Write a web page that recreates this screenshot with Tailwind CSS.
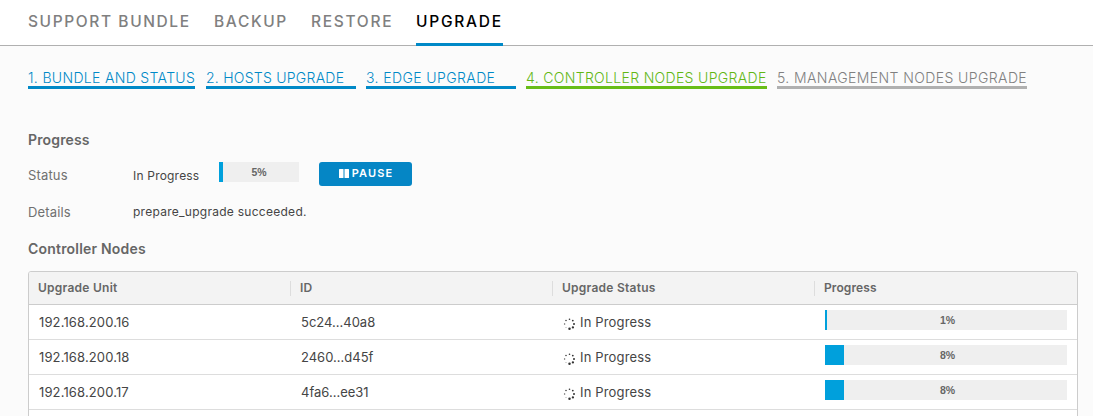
<!DOCTYPE html>
<html lang="en">
<head>
<meta charset="utf-8">
<title>Upgrade</title>
<script src="https://cdn.jsdelivr.net/npm/@tailwindcss/browser@4"></script>
</head>
<body class="h-[416px] overflow-hidden bg-[#fbfbfb] font-['Inter',sans-serif] text-[13px] text-[#454545]">
<svg class="hidden"><symbol id="spin" viewBox="0 0 12 12"><g fill="#333"><circle cx="6.5" cy="1.2" r=".8"/><circle cx="9.8" cy="2.6" r=".9"/><circle cx="11" cy="6" r="1"/><circle cx="9.9" cy="9.4" r="1.15"/><circle cx="6.5" cy="10.7" r="1.25"/><circle cx="3" cy="9.4" r=".5" opacity=".5"/><circle cx="1.6" cy="6" r=".7" opacity=".8"/><circle cx="3" cy="2.6" r=".75"/></g></symbol></svg>
<nav class="flex h-[46px] border-b border-[#b0b0b0] bg-white pl-7 text-[15.5px] leading-[44px] font-medium text-[#808080] whitespace-nowrap">
  <a class="w-[186px] tracking-[1.6px]">SUPPORT BUNDLE</a>
  <a class="w-[97px] tracking-[1.65px]">BACKUP</a>
  <a class="w-[105px] tracking-[1.7px]">RESTORE</a>
  <a class="h-[46px] w-[87px] border-b-3 border-[#0089c7] tracking-[1.75px] text-black">UPGRADE</a>
</nav>
<main class="px-7 pt-[21px]">
  <ol class="flex h-[22px] text-[14px] leading-[22px] font-light whitespace-nowrap">
    <li class="mr-[11px] w-[167px] border-b-3 border-[#0089c7] tracking-[.33px] text-[#0089c7]">1. BUNDLE AND STATUS</li>
    <li class="mr-[10px] w-[150px] border-b-3 border-[#0089c7] tracking-[.25px] text-[#0089c7]">2. HOSTS UPGRADE</li>
    <li class="mr-[10px] w-[150px] border-b-3 border-[#0089c7] tracking-[.4px] text-[#0089c7]">3. EDGE UPGRADE</li>
    <li class="mr-[10px] w-[241px] border-b-3 border-[#68bd17] tracking-[.33px] text-[#62b715]">4. CONTROLLER NODES UPGRADE</li>
    <li class="w-[250px] border-b-3 border-[#b0b0b0] tracking-[.4px] text-[#808080]">5. MANAGEMENT NODES UPGRADE</li>
  </ol>
  <h2 class="mt-[41px] h-5 text-[14px] leading-5 font-semibold tracking-[.15px] text-[#666]">Progress</h2>
  <div class="mt-3 flex h-6 whitespace-nowrap">
    <span class="w-[105px] leading-[27px] tracking-[.15px] text-[#707070]">Status</span>
    <span class="w-[86px] text-[12px] leading-[28px] tracking-[.2px]">In Progress</span>
    <div class="flex h-5 w-20 bg-[#efefef]"><div class="h-5 w-1 shrink-0 bg-[#00a0dc]"></div><div class="-ml-1 w-20 shrink-0 text-center font-['Liberation_Sans',sans-serif] text-[10.5px] leading-[20px] font-bold text-[#666]">5%</div></div>
    <button class="ml-5 flex h-6 w-[93px] items-center justify-center gap-[3px] rounded-[3px] bg-[#0586c5] pb-[2px] pl-px text-[11px] font-semibold tracking-[1.15px] text-white"><svg class="h-[9px] w-[10px]" viewBox="0 0 10 9" fill="white"><rect width="4.5" height="9" rx=".5"/><rect x="5.5" width="4.5" height="9" rx=".5"/></svg>PAUSE</button>
  </div>
  <div class="mt-4 flex h-5 leading-5 whitespace-nowrap">
    <span class="w-[105px] tracking-[.15px] text-[#707070]">Details</span><span class="text-[12px] tracking-[.27px]">prepare_upgrade succeeded.</span>
  </div>
  <h2 class="mt-[17px] h-5 text-[14px] leading-5 font-semibold tracking-[.2px] text-[#666]">Controller Nodes</h2>
  <section class="mt-3 h-[160px] w-[1050px] rounded-t-[3px] border border-[#ccc] bg-white">
    <div class="grid h-[33px] grid-cols-[262px_262px_262px_262px] items-center rounded-t-[2px] border-b border-[#ccc] bg-[#f3f3f3] text-[12px] leading-[15px] font-semibold tracking-[.25px] text-[#666]">
      <span class="pb-px pl-[9px]">Upgrade Unit</span><span class="-ml-px border-l border-[#ddd] pb-px pl-[9px] leading-[14px]">ID</span><span class="-ml-px border-l border-[#ddd] pb-px pl-[9px] leading-[14px]">Upgrade Status</span><span class="-ml-px border-l border-[#ddd] pb-px pl-[9px] leading-[14px] tracking-[.1px]">Progress</span>
    </div>
    <div class="grid h-[35px] grid-cols-[262px_262px_262px_262px] border-b border-[#ddd] leading-[35px]">
      <span class="pl-[10px] tracking-[.13px]">192.168.200.16</span><span class="pl-[10px]">5c24...40a8</span><span class="flex pl-[10px] tracking-[.15px]"><svg class="mt-[13px] mr-[5px] size-3"><use href="#spin"/></svg>In Progress</span>
      <div class="mt-[5px] ml-[10px] flex h-5 w-[242px] bg-[#efefef]"><div class="w-[2px] shrink-0 bg-[#00a0dc]"></div><div class="-ml-[2px] w-[245px] shrink-0 text-center font-['Liberation_Sans',sans-serif] text-[10.5px] leading-[20px] font-bold text-[#666]">1%</div></div>
    </div>
    <div class="grid h-[35px] grid-cols-[262px_262px_262px_262px] border-b border-[#ddd] leading-[35px]">
      <span class="pl-[10px] tracking-[.13px]">192.168.200.18</span><span class="pl-[10px]">2460...d45f</span><span class="flex pl-[10px] tracking-[.15px]"><svg class="mt-[13px] mr-[5px] size-3"><use href="#spin"/></svg>In Progress</span>
      <div class="mt-[5px] ml-[10px] flex h-5 w-[242px] bg-[#efefef]"><div class="w-[19px] shrink-0 bg-[#00a0dc]"></div><div class="-ml-[19px] w-[245px] shrink-0 text-center font-['Liberation_Sans',sans-serif] text-[10.5px] leading-[20px] font-bold text-[#666]">8%</div></div>
    </div>
    <div class="grid h-[35px] grid-cols-[262px_262px_262px_262px] border-b border-[#ddd] leading-[35px]">
      <span class="pl-[10px] tracking-[.13px]">192.168.200.17</span><span class="pl-[10px]">4fa6...ee31</span><span class="flex pl-[10px] tracking-[.15px]"><svg class="mt-[13px] mr-[5px] size-3"><use href="#spin"/></svg>In Progress</span>
      <div class="mt-[5px] ml-[10px] flex h-5 w-[242px] bg-[#efefef]"><div class="w-[19px] shrink-0 bg-[#00a0dc]"></div><div class="-ml-[19px] w-[245px] shrink-0 text-center font-['Liberation_Sans',sans-serif] text-[10.5px] leading-[20px] font-bold text-[#666]">8%</div></div>
    </div>
  </section>
</main>
</body>
</html>
